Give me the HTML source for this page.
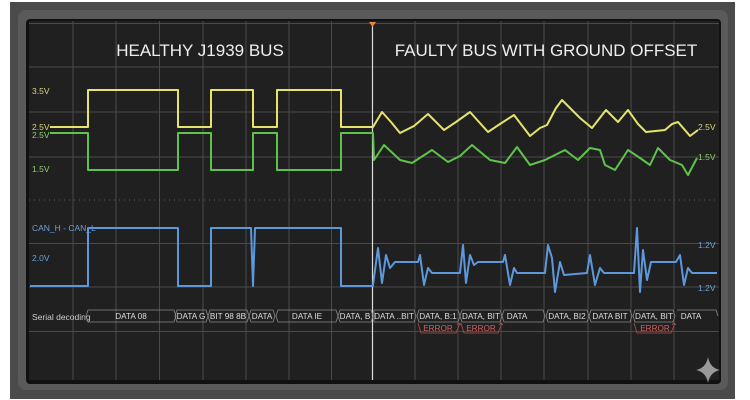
<!DOCTYPE html>
<html><head><meta charset="utf-8"><style>
html,body{margin:0;padding:0;background:#fff;width:750px;height:400px;overflow:hidden}
svg{display:block}
text{font-family:"Liberation Sans",sans-serif}
</style></head><body>
<svg width="750" height="400" viewBox="0 0 750 400" xmlns="http://www.w3.org/2000/svg">
<rect x="0" y="0" width="750" height="400" fill="#fff"/>
<rect x="10" y="2" width="725" height="397" fill="#4b4b4b"/>
<rect x="18" y="10" width="710" height="380" rx="8" fill="#5a5a5a"/>
<rect x="26" y="19" width="695" height="365" rx="4" fill="#111"/>
<rect x="29" y="21" width="690" height="359" fill="#202020"/>
<g stroke="#4a4a4a" stroke-width="1">
<line x1="73" y1="21" x2="73" y2="380"/><line x1="116" y1="21" x2="116" y2="380"/>
<line x1="159.5" y1="21" x2="159.5" y2="380"/><line x1="203" y1="21" x2="203" y2="380"/>
<line x1="246" y1="21" x2="246" y2="380"/><line x1="289" y1="21" x2="289" y2="380"/>
<line x1="331.5" y1="21" x2="331.5" y2="380"/><line x1="415" y1="21" x2="415" y2="380"/>
<line x1="458" y1="21" x2="458" y2="380"/><line x1="501" y1="21" x2="501" y2="380"/>
<line x1="544" y1="21" x2="544" y2="380"/><line x1="588" y1="21" x2="588" y2="380"/>
<line x1="631" y1="21" x2="631" y2="380"/><line x1="674" y1="21" x2="674" y2="380"/>
<line x1="29" y1="23.5" x2="719" y2="23.5"/><line x1="29" y1="67" x2="719" y2="67"/>
<line x1="29" y1="112" x2="719" y2="112"/><line x1="29" y1="157" x2="719" y2="157"/>
<line x1="29" y1="243.5" x2="719" y2="243.5"/><line x1="29" y1="287" x2="719" y2="287"/>
<line x1="29" y1="331.5" x2="719" y2="331.5"/>
</g>
<line x1="29" y1="200" x2="719" y2="200" stroke="#5a5a5a" stroke-dasharray="1,4"/>
<line x1="372.5" y1="22" x2="372.5" y2="380" stroke="#ddd" stroke-width="1.2"/>
<path d="M369 22 L376 22 L372.5 27 Z" fill="#e08a3a"/>
<text x="200" y="56" fill="#eee" font-size="17" text-anchor="middle">HEALTHY J1939 BUS</text>
<text x="546" y="56" fill="#eee" font-size="17" text-anchor="middle">FAULTY BUS WITH GROUND OFFSET</text>
<g font-size="8.5">
<text x="32" y="94" fill="#d8d57a">3.5V</text>
<text x="32" y="130" fill="#d8d57a">2.5V</text>
<text x="32" y="138" fill="#8ccf6a">2.5V</text>
<text x="32" y="172" fill="#8ccf6a">1.5V</text>
<text x="32" y="231" fill="#6f9fd8">CAN_H - CAN_L</text>
<text x="32" y="261" fill="#6f9fd8">2.0V</text>
<text x="698" y="130" fill="#d8d57a">2.5V</text>
<text x="698" y="160" fill="#8ccf6a">1.5V</text>
<text x="698" y="248" fill="#6f9fd8">1.2V</text>
<text x="698" y="291" fill="#6f9fd8">1.2V</text>
</g>
<g fill="none" stroke-width="2" stroke-linejoin="round">
<path stroke="#e6e36a" d="M50 127 H88 V90 H178 V127 H211 V90 H253 V127 H277 V90 H341 V127 H373 L382 112 L391 122 L400 133 L414 126 L428 114 L444 130 L456 122 L470 112 L488 132 L500 124 L514 115 L530 136 L540 128 L547 125 L556 108 L562 100 L572 110 L580 118 L592 128 L606 110 L618 122 L628 110 L638 124 L646 132 L665 130 L672 124 L678 122 L690 136 L698 130"/>
<path stroke="#5fc34a" d="M50 133 H88 V170 H178 V133 H211 V170 H253 V133 H277 V170 H341 V133 H373 L374 160 L384 145 L400 160 L412 163 L432 150 L448 162 L460 156 L472 145 L490 160 L505 163 L517 147 L530 165 L545 160 L565 150 L578 160 L590 148 L600 150 L605 165 L615 170 L628 150 L640 158 L650 165 L658 148 L670 160 L682 165 L688 175 L697 158"/>
<path stroke="#5e98dc" d="M30 286 H88 V228 H178 V286 H211 V228 H251 L253 286 L255 228 H341 V286 H373 V285 L378 248 L382 283 L386 255 L390 268 L395 262 L418 262 L420 255 L424 285 L428 268 L432 273 L460 273 L463 245 L466 283 L470 255 L474 265 L478 262 L503 262 L505 255 L510 285 L514 268 L517 273 L545 273 L548 245 L552 258 L555 292 L560 262 L564 275 L587 273 L590 255 L595 285 L600 268 L604 273 L634 273 L637 228 L640 292 L643 250 L647 280 L651 262 L676 262 L680 255 L684 285 L688 268 L692 273 L717 273"/>
</g>
<text x="32" y="320" fill="#ccc" font-size="8.5">Serial decoding</text>
<g fill="none" stroke="#888" stroke-width="0.8">
<path d="M88 310 H174 L176 316 L174 322 H88 L86 316 Z"/>
<path d="M177 310 H206 L208 316 L206 322 H177 L175 316 Z"/>
<path d="M210 310 H247 L249 316 L247 322 H210 L208 316 Z"/>
<path d="M251 310 H273 L275 316 L273 322 H251 L249 316 Z"/>
<path d="M278 310 H336 L338 316 L336 322 H278 L276 316 Z"/>
<path d="M340 310 H371 L373 316 L371 322 H340 L338 316 Z"/>
<path d="M374 310 H414 L416 316 L414 322 H374 Z"/>
<path d="M419 310 H458 L460 316 L458 322 H419 L417 316 Z"/>
<path d="M462 310 H500 L502 316 L500 322 H462 L460 316 Z"/>
<path d="M504 310 H543 L545 316 L543 322 H504 L502 316 Z"/>
<path d="M548 310 H587 L589 316 L587 322 H548 L546 316 Z"/>
<path d="M591 310 H630 L632 316 L630 322 H591 L589 316 Z"/>
<path d="M635 310 H673 L675 316 L673 322 H635 L633 316 Z"/>
<path d="M677 310 H716 L718 316"/>
</g>
<g fill="none" stroke="#b05050" stroke-width="0.8">
<path d="M418 323 L421 333 H456 L460 323 M457 325 L459 323 L461 325"/>
<path d="M461 323 L464 333 H498 L502 323 M499 325 L501 323 L503 325"/>
<path d="M634 323 L637 333 H671 L675 323 M672 325 L674 323 L676 325"/>
</g>
<g font-size="8.2" fill="#ddd" text-anchor="middle">
<text x="131" y="319">DATA 08</text><text x="191" y="319">DATA G</text>
<text x="228" y="319">BIT 98 8B</text><text x="262" y="319">DATA</text>
<text x="307" y="319">DATA IE</text><text x="355" y="319">DATA, B</text>
<text x="394" y="319">DATA ..BIT</text><text x="438" y="319">DATA, B:1</text>
<text x="481" y="319">DATA, BIT</text><text x="517" y="319">DATA</text>
<text x="567" y="319">DATA, BI2</text><text x="610" y="319">DATA BIT</text>
<text x="654" y="319">DATA, BIT</text><text x="691" y="319">DATA</text>
</g>
<g font-size="8.2" fill="#d06060" text-anchor="middle">
<text x="438" y="331">ERROR</text><text x="481" y="331">ERROR</text><text x="655" y="331">ERROR</text>
</g>
<path d="M708 357 Q710 368 720 370 Q710 372 708 383 Q706 372 696 370 Q706 368 708 357 Z" fill="#9a9a9a"/>
</svg>
</body></html>
